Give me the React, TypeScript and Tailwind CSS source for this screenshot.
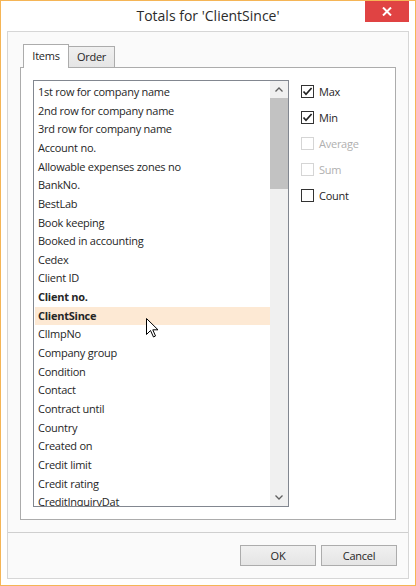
import React from "react";

const items = [
  "1st row for company name",
  "2nd row for company name",
  "3rd row for company name",
  "Account no.",
  "Allowable expenses zones no",
  "BankNo.",
  "BestLab",
  "Book keeping",
  "Booked in accounting",
  "Cedex",
  "Client ID",
  "Client no.",
  "ClientSince",
  "ClImpNo",
  "Company group",
  "Condition",
  "Contact",
  "Contract until",
  "Country",
  "Created on",
  "Credit limit",
  "Credit rating",
  "CreditInquiryDat",
];

function Check({ label, checked, disabled }: { label: string; checked?: boolean; disabled?: boolean }) {
  return (
    <div className="flex items-center h-[13px]">
      <div
        className={
          "w-[13px] h-[13px] border bg-white flex items-center justify-center " +
          (disabled ? "border-[#d5d5d5]" : "border-[#333333]")
        }
      >
        {checked && (
          <svg width="11" height="11" viewBox="0 0 11 11">
            <path d="M1.5 5.5 L4 8.3 L9.6 2" fill="none" stroke="#222" strokeWidth="1.7" />
          </svg>
        )}
      </div>
      <span
        className={
          "ml-[5px] text-[11px] tracking-[-0.25px] leading-none " +
          (disabled ? "text-[#b0b0b0]" : "text-[#262626]")
        }
      >
        {label}
      </span>
    </div>
  );
}

export default function App() {
  return (
    <div
      className="w-[416px] h-[586px] border border-[#f5b556] bg-white flex flex-col text-[#262626]"
      style={{ fontFamily: '"Open Sans", "Noto Sans", sans-serif' }}
    >
      {/* Title bar */}
      <div className="h-[30px] grid grid-cols-[1fr_auto_1fr] items-start">
        <div />
        <div className="pt-[5px] text-[14px] leading-[20px] text-[#2b2b2b]">Totals for 'ClientSince'</div>
        <div className="flex justify-end pr-[6px]">
          <div className="w-[44px] h-[21px] bg-[#e04343] flex items-center justify-center">
            <svg width="10" height="9" viewBox="0 0 10 9">
              <path d="M1 0.5 L9 8.5 M9 0.5 L1 8.5" stroke="#fff" strokeWidth="2" />
            </svg>
          </div>
        </div>
      </div>

      {/* Panel */}
      <div className="flex-1 mx-[6px] mb-[6px] border border-[#d6d6d6] bg-[#fafafa] flex flex-col">
        <div className="h-[500px] pt-[12px] px-[12px] pb-[12px] flex flex-col">
          {/* Tab headers */}
          <div className="flex items-end h-[23px] pl-[3px] relative z-10">
            <div className="w-[46px] h-[24px] -mb-px border border-b-0 border-[#acacac] bg-white flex items-center justify-center text-[11px] tracking-[-0.25px] pb-[1px]">
              Items
            </div>
            <div className="w-[47px] h-[21px] -ml-px border border-b-0 border-[#acacac] bg-gradient-to-b from-[#f0f0f0] to-[#e5e5e5] flex items-center justify-center text-[11px] tracking-[-0.25px]">
              Order
            </div>
          </div>
          {/* Tab pane */}
          <div className="flex-1 border border-[#acacac] bg-white p-[12px] flex gap-[12px]">
            {/* List box */}
            <div className="w-[256px] h-[427px] border border-[#828790] bg-white flex">
              <div className="flex-1 overflow-hidden pt-[2px] pl-[1px]">
                {items.map((t) => (
                  <div
                    key={t}
                    className={
                      "h-[18.65px] pl-[3px] flex items-center text-[11px] tracking-[-0.25px] whitespace-nowrap " +
                      (t === "ClientSince" ? "bg-[#fde9d4] font-bold " : "") +
                      (t === "Client no." ? "font-bold" : "")
                    }
                  >
                    {t}
                  </div>
                ))}
              </div>
              <div className="w-[18px] bg-[#f0f0f0] flex flex-col">
                <div className="h-[17px] flex items-center justify-center">
                  <svg width="8" height="5" viewBox="0 0 8 5">
                    <path d="M0.5 4.5 L4 1 L7.5 4.5" fill="none" stroke="#606060" strokeWidth="1.3" />
                  </svg>
                </div>
                <div className="h-[91px] bg-[#c2c2c2]" />
                <div className="flex-1" />
                <div className="h-[17px] flex items-center justify-center">
                  <svg width="8" height="5" viewBox="0 0 8 5">
                    <path d="M0.5 0.5 L4 4 L7.5 0.5" fill="none" stroke="#606060" strokeWidth="1.3" />
                  </svg>
                </div>
              </div>
            </div>
            {/* Checkboxes */}
            <div className="pt-[5px] flex flex-col gap-[13px]">
              <Check label="Max" checked />
              <Check label="Min" checked />
              <Check label="Average" disabled />
              <Check label="Sum" disabled />
              <Check label="Count" />
            </div>
          </div>
        </div>
        <div className="h-px bg-[#cfcfcf]" />
        <div className="flex-1 flex justify-end items-start pt-[12px] pr-[11px] gap-[5px]">
          <button className="w-[76px] h-[21px] border border-[#acacac] bg-gradient-to-b from-[#f0f0f0] to-[#e5e5e5] text-[11px] tracking-[-0.25px] leading-none">
            OK
          </button>
          <button className="w-[76px] h-[21px] border border-[#acacac] bg-gradient-to-b from-[#f0f0f0] to-[#e5e5e5] text-[11px] tracking-[-0.25px] leading-none">
            Cancel
          </button>
        </div>
      </div>

      {/* Mouse cursor overlay */}
      <svg className="absolute left-[146px] top-[318px]" width="13" height="20" viewBox="0 0 13 20">
        <path
          d="M0.5 0.5 L0.5 16.5 L4.5 12.5 L7.5 19 L9.5 18 L6.8 11.8 L12 11.8 Z"
          fill="#fff"
          stroke="#000"
          strokeWidth="1"
          strokeLinejoin="miter"
        />
      </svg>
    </div>
  );
}
